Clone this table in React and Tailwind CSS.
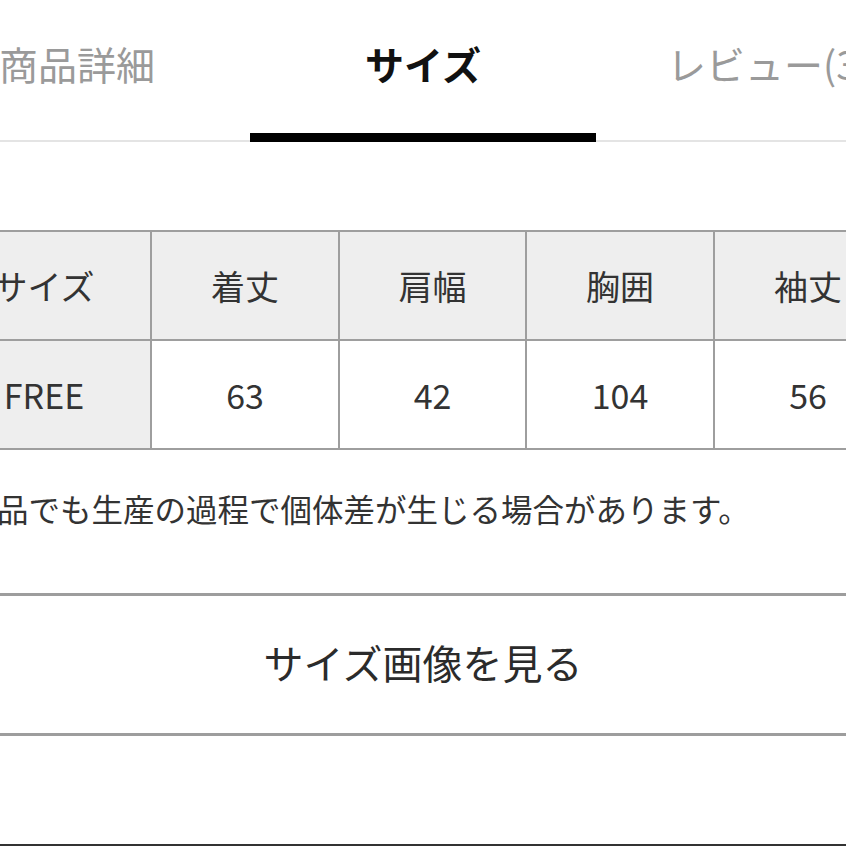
const tabs = [
  { label: '商品詳細', active: false },
  { label: 'サイズ', active: true },
  { label: 'レビュー(3)', active: false },
];

const headers = ['サイズ', '着丈', '肩幅', '胸囲', '袖丈'];
const values = ['FREE', '63', '42', '104', '56'];
const widths = ['w-[214px]', 'w-[188px]', 'w-[187px]', 'w-[188px]', 'w-[188px]'];

export default function App() {
  return (
    <div
      className="w-[846px] h-[846px] overflow-hidden bg-white flex flex-col"
      style={{ fontFamily: '"Noto Sans CJK JP", "Noto Sans", sans-serif' }}
    >
      {/* Tabs */}
      <div className="flex justify-center items-end border-b-2 border-[#e4e4e4] h-[142px] shrink-0">
        {tabs.map((t) => (
          <div
            key={t.label}
            className={
              t.active
                ? 'w-[346px] shrink-0 h-[142px] -mb-[2px] border-b-[9px] border-black flex justify-center pt-[37px]'
                : 'w-[346px] shrink-0 h-[140px] flex justify-center pt-[37px]'
            }
          >
            <span
              className={
                t.active
                  ? 'text-[39px] leading-[52px] font-bold text-[#111] whitespace-nowrap'
                  : 'text-[39px] leading-[52px] text-[#9a9a9a] whitespace-nowrap'
              }
            >
              {t.label}
            </span>
          </div>
        ))}
      </div>

      {/* Size table */}
      <div className="mt-[88px] ml-[-64px] w-[965px] shrink-0">
        <table className="table-fixed w-[965px] border-collapse text-[34px] text-[#333]">
          <tbody>
            <tr className="h-[109px]">
              {headers.map((h, i) => (
                <td
                  key={h}
                  className={`${widths[i]} border-2 border-[#9e9e9e] bg-[#eeeeee] text-center align-middle p-0 whitespace-nowrap`}
                >
                  {h}
                </td>
              ))}
            </tr>
            <tr className="h-[109px]">
              {values.map((v, i) => (
                <td
                  key={v}
                  className={
                    i === 0
                      ? `${widths[i]} border-2 border-[#9e9e9e] bg-[#eeeeee] text-center align-middle p-0 whitespace-nowrap`
                      : `${widths[i]} border-2 border-[#9e9e9e] bg-white text-center align-middle p-0 whitespace-nowrap`
                  }
                >
                  {v}
                </td>
              ))}
            </tr>
          </tbody>
        </table>
      </div>

      {/* Note */}
      <p className="mt-[36px] ml-[-3px] text-[31.5px] leading-[45px] text-[#333] whitespace-nowrap shrink-0">
        品でも生産の過程で個体差が生じる場合があります。
      </p>

      {/* Button */}
      <div className="mt-[62px] h-[143px] border-y-[3px] border-[#9d9d9d] flex items-center justify-center shrink-0">
        <span className="text-[40px] leading-[48px] text-[#2b2b2b] -mt-[6px]">サイズ画像を見る</span>
      </div>

      <div className="flex-1" />
      <div className="h-[2px] bg-[#333] shrink-0" />
    </div>
  );
}
